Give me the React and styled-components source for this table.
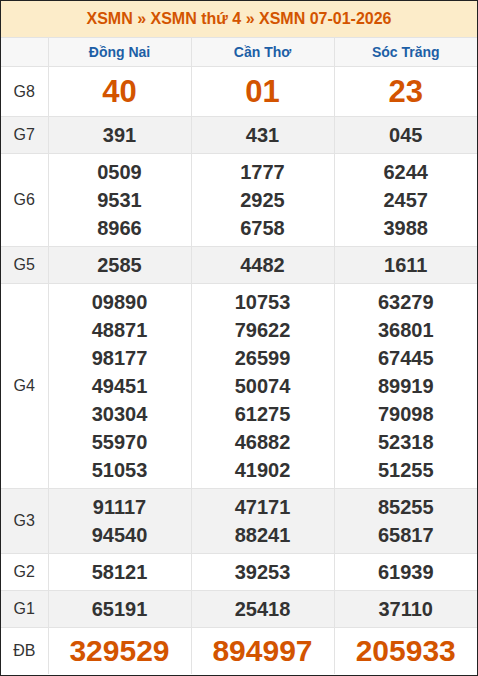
import React from 'react'
import styled, { createGlobalStyle } from 'styled-components'

const GlobalStyle = createGlobalStyle`
  body {
    margin: 0;
    background: #fff;
    font-family: Arial, 'Liberation Sans', sans-serif;
  }
`

const provinces = ['Đồng Nai', 'Cần Thơ', 'Sóc Trăng']

const prizes = [
  { label: 'G8', big: true, values: [['40'], ['01'], ['23']] },
  { label: 'G7', values: [['391'], ['431'], ['045']] },
  {
    label: 'G6',
    values: [
      ['0509', '9531', '8966'],
      ['1777', '2925', '6758'],
      ['6244', '2457', '3988'],
    ],
  },
  { label: 'G5', values: [['2585'], ['4482'], ['1611']] },
  {
    label: 'G4',
    values: [
      ['09890', '48871', '98177', '49451', '30304', '55970', '51053'],
      ['10753', '79622', '26599', '50074', '61275', '46882', '41902'],
      ['63279', '36801', '67445', '89919', '79098', '52318', '51255'],
    ],
  },
  {
    label: 'G3',
    values: [
      ['91117', '94540'],
      ['47171', '88241'],
      ['85255', '65817'],
    ],
  },
  { label: 'G2', values: [['58121'], ['39253'], ['61939']] },
  { label: 'G1', values: [['65191'], ['25418'], ['37110']] },
  { label: 'ĐB', special: true, values: [['329529'], ['894997'], ['205933']] },
]

const App = () => {
  return (
    <>
      <GlobalStyle />
      <Wrapper>
        <Title>XSMN » XSMN thứ 4 » XSMN 07-01-2026</Title>
        <Table>
          <colgroup>
            <col style={{ width: 47 }} />
            <col />
            <col />
            <col />
          </colgroup>
          <thead>
            <tr>
              <HeadCell />
              {provinces.map((p) => (
                <HeadCell key={p}>{p}</HeadCell>
              ))}
            </tr>
          </thead>
          <tbody>
            {prizes.map((row, i) => (
              <Row key={row.label} $shaded={i % 2 === 1}>
                <Label>{row.label}</Label>
                {row.values.map((nums, j) => (
                  <Cell key={j} $big={row.big} $special={row.special}>
                    {nums.map((n) => (
                      <div key={n}>{n}</div>
                    ))}
                  </Cell>
                ))}
              </Row>
            ))}
          </tbody>
        </Table>
      </Wrapper>
    </>
  )
}

const Wrapper = styled.div`
  width: 478px;
  height: 676px;
  box-sizing: border-box;
  border: 1px solid #222;
  overflow: hidden;
`

const Title = styled.div`
  height: 36px;
  display: flex;
  align-items: center;
  justify-content: center;
  background: #fcecc9;
  color: #d35400;
  font-weight: bold;
  font-size: 16px;
  border-bottom: 1px solid #e3e3e3;
`

const Table = styled.table`
  width: 100%;
  border-collapse: collapse;
  table-layout: fixed;
`

const HeadCell = styled.th`
  height: 28px;
  padding: 0;
  background: #f7f7f7;
  color: #1d5fa6;
  font-size: 14px;
  font-weight: bold;
  border: 1px solid #e3e3e3;
  border-top: none;
  &:first-child {
    border-left: none;
  }
  &:last-child {
    border-right: none;
  }
`

const Row = styled.tr`
  background: ${(p) => (p.$shaded ? '#f2f2f2' : '#fff')};
  td {
    border: 1px solid #e3e3e3;
  }
  td:first-child {
    border-left: none;
  }
  td:last-child {
    border-right: none;
  }
  &:last-child td {
    border-bottom: none;
  }
`

const Label = styled.td`
  text-align: center;
  color: #333;
  font-size: 16px;
  padding: 0;
`

const Cell = styled.td`
  text-align: center;
  font-weight: bold;
  padding: ${(p) => (p.$big ? '8px 0 7px' : p.$special ? '6px 0' : '4px 0')};
  color: ${(p) => (p.$big || p.$special ? '#d35400' : '#333')};
  font-size: ${(p) => (p.$big ? '31px' : p.$special ? '30px' : '20px')};
  line-height: ${(p) => (p.$big || p.$special ? '34px' : '28px')};
`

export default App
